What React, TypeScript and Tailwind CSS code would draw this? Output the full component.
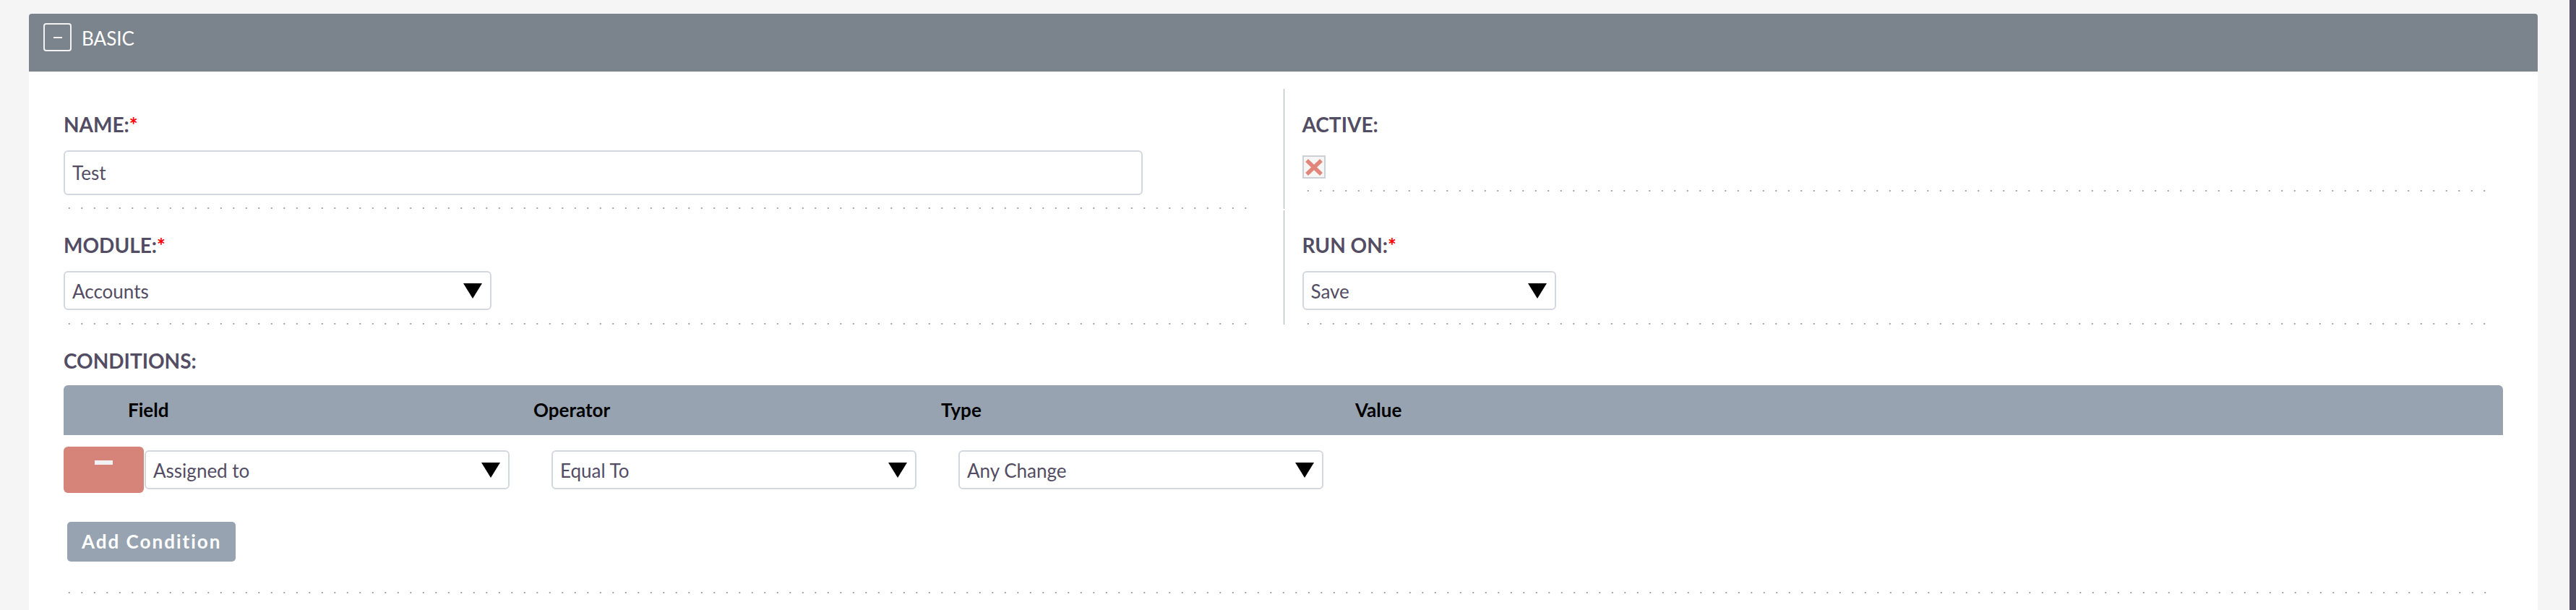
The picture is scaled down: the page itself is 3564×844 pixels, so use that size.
import React from "react";

const font = { fontFamily: "Lato, 'Open Sans', sans-serif" };

// dotted separator under each field cell
const Dots = ({ className = "" }: { className?: string }) => (
  <div
    className={`h-[2px] bg-[linear-gradient(to_right,transparent_7px,#a3a3a3_7px,#a3a3a3_9px,transparent_9px)] bg-[length:17.5px_2px] bg-repeat-x ${className}`}
  />
);

const Label = ({ text, required }: { text: string; required?: boolean }) => (
  <div className="text-[28px] leading-[34px] font-bold text-[#534d64] whitespace-nowrap">
    {text}
    {required && <span className="text-[#ff0000]">*</span>}
  </div>
);

const Arrow = () => (
  <svg width="26" height="21" viewBox="0 0 26 21">
    <polygon points="0,0 26,0 13,21" fill="#000" />
  </svg>
);

const Select = ({ value, className = "" }: { value: string; className?: string }) => (
  <div
    className={`h-[54px] border-2 border-[#d3d7de] rounded-[6px] bg-white flex items-center justify-between pl-[10px] pr-[11px] ${className}`}
  >
    <span className="pt-[3px] text-[26px] text-[#534d64] whitespace-nowrap">{value}</span>
    <Arrow />
  </div>
);

export default function App() {
  return (
    <div className="flex min-h-screen bg-[#f5f5f5]" style={font}>
      <div className="flex-1 pt-[19px]">
        <div className="ml-[40px] mr-[44px]">
          {/* panel header */}
          <div className="h-[80px] rounded-t-[4px] bg-[#7b848c] flex items-start pt-[13px] pl-[20px]">
            <div className="w-[39px] h-[39px] border-2 border-[#f2f2f2] rounded-[4px] flex items-center justify-center">
              <div className="w-[12px] h-[2px] bg-[#f2f2f2]" />
            </div>
            <span className="ml-[14px] mt-[6px] text-[26px] leading-[31px] text-white">BASIC</span>
          </div>

          {/* panel body */}
          <div className="bg-white pt-[24px] min-h-[745px]">
            <div className="grid grid-cols-2">
              <div className="pl-[48px] pr-[51px] pt-[32px]">
                <Label text="NAME:" required />
                <div className="mt-[19px] w-[1493px] h-[62px] border-2 border-[#d3d7de] rounded-[6px] flex items-center pl-[10px]">
                  <span className="pt-[1px] text-[26px] text-[#534d64]">Test</span>
                </div>
                <Dots className="mt-[17px]" />
              </div>
              <div className="border-l border-[#a9aeb6] pl-[25px] pr-[71px] pt-[32px]">
                <Label text="ACTIVE:" />
                <div className="mt-[26px] w-[32px] h-[32px] border-2 border-[#cdd1d7] bg-[#f6f6f6] flex items-center justify-center">
                  <svg width="24" height="23" viewBox="0 0 24 23" className="blur-[0.5px]">
                    <line x1="2" y1="2" x2="22" y2="21" stroke="#e0867a" strokeWidth="5.5" />
                    <line x1="22" y1="2" x2="2" y2="21" stroke="#e0867a" strokeWidth="5.5" />
                  </svg>
                </div>
                <Dots className="mt-[16px]" />
              </div>
            </div>

            <div className="grid grid-cols-2 mt-[2px]">
              <div className="pl-[48px] pr-[51px] pt-[31px]">
                <Label text="MODULE:" required />
                <Select value="Accounts" className="mt-[19px] w-[592px]" />
                <Dots className="mt-[18px]" />
              </div>
              <div className="border-l border-[#a9aeb6] pl-[25px] pr-[71px] pt-[31px]">
                <Label text="RUN ON:" required />
                <Select value="Save" className="mt-[19px] w-[351px]" />
                <Dots className="mt-[18px]" />
              </div>
            </div>

            {/* conditions */}
            <div className="px-[48px] mt-[33px]">
              <Label text="CONDITIONS:" />
              <div className="mt-[17px] h-[69px] rounded-t-[6px] bg-[#97a3b0] flex items-center text-[26px] font-bold text-black">
                <div className="w-[89px]" />
                <div className="w-[561px]">Field</div>
                <div className="w-[564px]">Operator</div>
                <div className="w-[573px]">Type</div>
                <div>Value</div>
              </div>
              <div className="mt-[16px] flex items-center">
                <button className="w-[111px] h-[64px] rounded-[6px] bg-[#d6837a] flex justify-center pt-[19px]">
                  <div className="w-[25px] h-[6px] bg-[#f2f2f2]" />
                </button>
                <Select value="Assigned to" className="ml-[1px] w-[505px]" />
                <Select value="Equal To" className="ml-[58px] w-[505px]" />
                <Select value="Any Change" className="ml-[58px] w-[505px]" />
              </div>
              <button className="mt-[40px] ml-[5px] h-[55px] px-[20px] rounded-[5px] bg-[#97a3b0] text-white text-[26px] font-bold tracking-[2px]">
                Add Condition
              </button>
              <Dots className="mt-[42px] mr-[23px]" />
            </div>
          </div>
        </div>
      </div>
      {/* scrollbar strip */}
      <div className="w-[9px] bg-[#534d64]" />
    </div>
  );
}
